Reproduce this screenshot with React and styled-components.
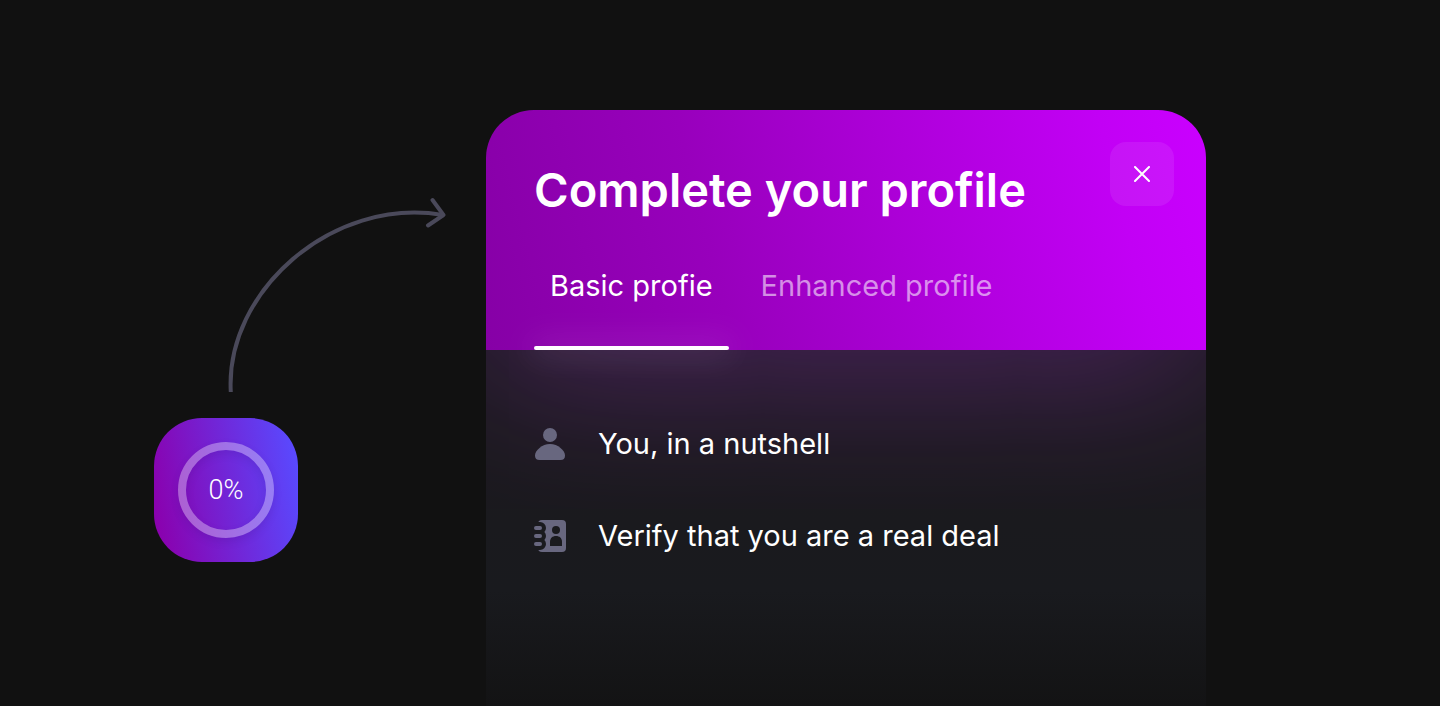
import React from "react";
import styled, { createGlobalStyle } from "styled-components";

const GlobalStyle = createGlobalStyle`
  *, *::before, *::after { box-sizing: border-box; }
  body {
    margin: 0;
    background: #111111;
    color: #ffffff;
    font-family: Inter, "Open Sans", sans-serif;
  }
`;

const Page = styled.main`
  display: flex;
  gap: 40px;
  min-height: 100vh;
  padding: 110px 234px 0 154px;
`;

const Launcher = styled.aside`
  flex: 0 0 292px;
  display: flex;
  flex-direction: column;
  align-items: flex-start;
  gap: 26px;
  padding-top: 86px;
`;

const Arrow = styled.svg`
  align-self: flex-end;
  display: block;
`;

const ProgressBadge = styled.button`
  display: grid;
  place-items: center;
  width: 144px;
  height: 144px;
  padding: 0;
  border: 0;
  border-radius: 48px;
  background: linear-gradient(80deg, #8b00ad 4%, #594aff 96%);
  cursor: pointer;
`;

const ProgressRing = styled.span`
  display: grid;
  place-items: center;
  width: 96px;
  height: 96px;
  border: 8px solid rgba(255, 255, 255, 0.34);
  border-radius: 50%;
  box-shadow: 0 4px 8px rgba(40, 0, 90, 0.12), inset 0 4px 8px rgba(40, 0, 90, 0.12);
  color: #ffffff;
  font: 300 27px/32px Roboto, sans-serif;
`;

const Card = styled.section`
  flex: 1 1 0;
  min-width: 0;
  display: flex;
  flex-direction: column;
  overflow: hidden;
  border-radius: 48px 48px 0 0;
  background: linear-gradient(180deg, #1b1a1e 0, #1b1a1e 350px, #191a1e 480px, #131314 100%);
`;

const CardHeader = styled.header`
  padding: 32px 32px 0 48px;
  background: linear-gradient(76deg, #8600a6 0%, #9800bc 32%, #ae00da 60%, #c200f5 86%, #ca00ff 100%);
  box-shadow: 0 16px 160px rgba(200, 60, 255, 0.32);
`;

const TitleRow = styled.div`
  display: flex;
  align-items: flex-start;
  justify-content: space-between;
`;

const Title = styled.h1`
  margin: 16px 0 0;
  font-size: 47px;
  font-weight: 600;
  line-height: 64px;
`;

const CloseButton = styled.button`
  display: grid;
  place-items: center;
  width: 64px;
  height: 64px;
  padding: 0;
  border: 0;
  border-radius: 16px;
  background: rgba(255, 255, 255, 0.08);
  cursor: pointer;
`;

const Tabs = styled.div`
  display: flex;
  gap: 16px;
`;

const Tab = styled.button`
  position: relative;
  padding: 48px 16px;
  border: 0;
  background: none;
  color: ${({ $active }) => ($active ? "#ffffff" : "rgba(255, 255, 255, 0.56)")};
  font: 400 29px/32px Inter, "Open Sans", sans-serif;
  white-space: nowrap;
  cursor: pointer;

  &::after {
    content: "";
    display: ${({ $active }) => ($active ? "block" : "none")};
    position: absolute;
    inset: auto 0 0;
    height: 4px;
    border-radius: 2px;
    background: #ffffff;
    box-shadow: 0 0 32px 4px rgba(255, 255, 255, 0.14);
  }
`;

const Steps = styled.ul`
  display: flex;
  flex-direction: column;
  gap: 60px;
  margin: 0;
  padding: 78px 48px;
  list-style: none;
`;

const Step = styled.li`
  position: relative;
  display: flex;
  align-items: center;
  gap: 32px;
  font-size: 29px;
  line-height: 32px;
`;

const StepIcon = styled.svg`
  flex: none;
  width: 32px;
  height: 32px;
  fill: #68677f;
`;

export default function App() {
  return (
    <>
      <GlobalStyle />
      <Page>
        <Launcher>
          <Arrow width="218" height="196" viewBox="228 196 218 196" fill="none" stroke="#4a495a" strokeWidth="4" aria-hidden="true">
            <path d="M230.800 392C225 292 332 196 443 215" />
            <path d="M432.500 200L443.500 215L428 225.500" strokeLinecap="round" strokeLinejoin="round" />
          </Arrow>
          <ProgressBadge type="button" aria-label="Profile completion 0%">
            <ProgressRing>0%</ProgressRing>
          </ProgressBadge>
        </Launcher>
        <Card>
          <CardHeader>
            <TitleRow>
              <Title>Complete your profile</Title>
              <CloseButton type="button" aria-label="Close">
                <svg width="16" height="16" viewBox="0 0 16 16" stroke="#fff" strokeWidth="2" strokeLinecap="round" aria-hidden="true">
                  <path d="M1 1L15 15M15 1L1 15" />
                </svg>
              </CloseButton>
            </TitleRow>
            <Tabs role="tablist">
              <Tab type="button" role="tab" aria-selected="true" $active>Basic profie</Tab>
              <Tab type="button" role="tab" aria-selected="false">Enhanced profile</Tab>
            </Tabs>
          </CardHeader>
          <Steps>
            <Step>
              <StepIcon viewBox="0 0 32 32" aria-hidden="true">
                <circle cx="16" cy="7" r="7" />
                <path d="M16 16C24 16 31 22.500 31 27.500C31 30.500 29.500 32 26.500 32H5.500C2.500 32 1 30.500 1 27.500C1 22.500 8 16 16 16Z" />
              </StepIcon>
              You, in a nutshell
            </Step>
            <Step>
              <StepIcon viewBox="0 0 32 32" aria-hidden="true">
                <mask id="contact-cutout">
                  <rect width="32" height="32" fill="#fff" />
                  <path d="M2 8H6M2 16H6M2 24H6" stroke="#000" strokeWidth="12" strokeLinecap="round" />
                  <circle cx="22" cy="10" r="4" fill="#000" />
                  <path d="M16 26V22C16 18 18.500 16 22 16C25.500 16 28 18 28 22V26Z" fill="#000" />
                </mask>
                <rect x="4" width="28" height="32" rx="4" mask="url(#contact-cutout)" />
                <path d="M2 8H6M2 16H6M2 24H6" stroke="#68677f" strokeWidth="4" strokeLinecap="round" />
              </StepIcon>
              Verify that you are a real deal
            </Step>
          </Steps>
        </Card>
      </Page>
    </>
  );
}
